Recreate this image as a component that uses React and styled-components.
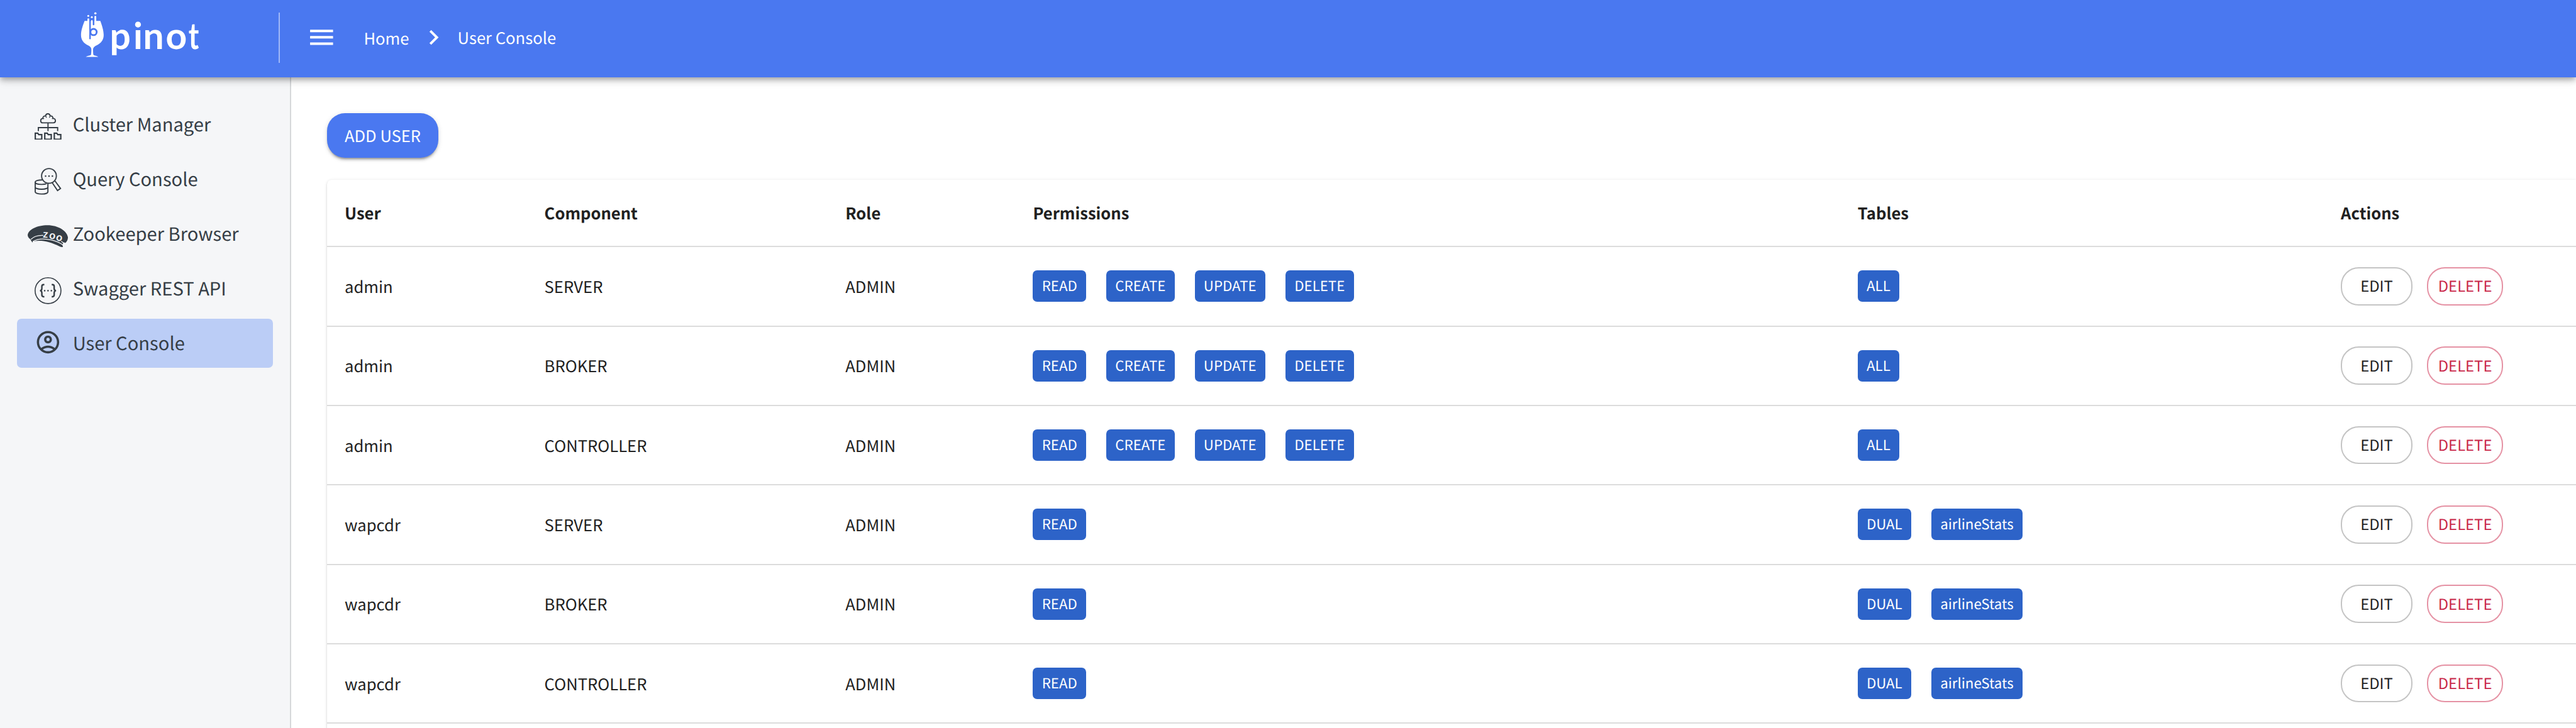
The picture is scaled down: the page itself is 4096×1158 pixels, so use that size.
import React from "react";
import styled, { createGlobalStyle } from "styled-components";

/* All lengths are design units, scaled once here. */
const SCALE = 4096 / 4604;
const s = (n) => `${+(n * SCALE).toFixed(3)}px`;

const FONT = `"Noto Sans CJK SC", "Noto Sans", sans-serif`;
const BLUE = "#4a78f0";
const INK = "#363e46";

const GlobalStyle = createGlobalStyle`
  *, *::before, *::after { box-sizing: border-box; }
  html, body { margin: 0; padding: 0; overflow: hidden; }
  body {
    background: #fff;
    color: #212121;
    font-family: ${FONT};
    text-rendering: geometricPrecision;
    -webkit-font-smoothing: antialiased;
  }
`;

const Page = styled.div`
  display: flex;
  flex-direction: column;
  height: 100vh;
  overflow: hidden;
`;

const Header = styled.header`
  position: relative;
  z-index: 2;
  flex: none;
  display: flex;
  align-items: center;
  height: ${s(138)};
  padding: 0 0 ${s(4)} ${s(140)};
  background: ${BLUE};
  color: #fff;
  box-shadow: 0 ${s(4)} ${s(8)} ${s(-2)} rgba(0, 0, 0, 0.2),
    0 ${s(8)} ${s(10)} 0 rgba(0, 0, 0, 0.14),
    0 ${s(2)} ${s(20)} 0 rgba(0, 0, 0, 0.12);
`;

const LogoArt = styled.svg`
  flex: none;
  width: ${s(220)};
  height: ${s(88)};
  margin-top: ${s(-10)};
`;

const HeaderDivider = styled.span`
  flex: none;
  width: 2px;
  height: ${s(90)};
  margin-left: ${s(138)};
  background: rgba(255, 255, 255, 0.48);
`;

const MenuIcon = styled.svg`
  flex: none;
  width: ${s(54.7)};
  height: ${s(54.7)};
  margin-left: ${s(47.6)};
  fill: currentColor;
`;

const Crumbs = styled.nav`
  display: flex;
  align-items: center;
  margin-left: ${s(47.6)};
  font-size: ${s(28.8)};
  line-height: ${s(44)};
  white-space: nowrap;
`;

const Crumb = styled.span`
  padding-top: ${(p) => s(p.$drop || 0)};
`;

const ChevronIcon = styled.svg`
  width: ${s(53)};
  height: ${s(53)};
  margin: 0 ${s(15.7)} 0 ${s(18)};
  fill: currentColor;
`;

const Body = styled.div`
  flex: 1;
  display: flex;
  min-height: 0;
`;

const Sidebar = styled.aside`
  flex: none;
  display: flex;
  flex-direction: column;
  gap: ${s(10)};
  width: ${s(520)};
  padding: ${s(40)} ${s(30)} 0 ${s(30)};
  background: #f5f6f8;
  border-right: 2px solid #d6d8da;
`;

const NavItem = styled.a`
  display: flex;
  align-items: center;
  height: ${s(88)};
  padding-left: ${s(20)};
  border-radius: ${s(8)};
  background: ${(p) => (p.$active ? "#bbcdf6" : "transparent")};
  color: ${INK};
`;

const NavIcon = styled.span`
  flex: none;
  display: flex;
  justify-content: center;
  width: ${s(72)};
  padding: ${(p) => s(p.$drop)} 0 ${(p) => s(p.$lift)};

  svg {
    display: block;
    width: ${(p) => s(p.$w)};
    height: ${(p) => s(p.$h)};
  }
`;

const NavLabel = styled.span`
  padding: 0 0 ${s(1.4)} ${s(8)};
  font-size: ${s(32.75)};
  line-height: ${s(48)};
  white-space: nowrap;
`;

const Main = styled.main`
  flex: 1;
  display: flex;
  flex-direction: column;
  min-width: 0;
  padding: ${s(64)} 0 0 ${s(64)};
  overflow: hidden;
`;

const AddButton = styled.button`
  flex: none;
  align-self: flex-start;
  width: ${s(200)};
  height: ${s(80)};
  padding: 0;
  border: 0;
  border-radius: ${s(32)};
  background: ${BLUE};
  color: #fff;
  font: 400 ${s(28.7)} / ${s(44)} ${FONT};
  text-rendering: inherit;
  box-shadow: 0 ${s(6)} ${s(2)} ${s(-4)} rgba(0, 0, 0, 0.2),
    0 ${s(4)} ${s(4)} 0 rgba(0, 0, 0, 0.14),
    0 ${s(2)} ${s(10)} 0 rgba(0, 0, 0, 0.12);
`;

const Card = styled.section`
  flex: 1;
  margin-top: ${s(40)};
  border-radius: ${s(8)} 0 0 0;
  background: #fff;
  box-shadow: 0 ${s(4)} ${s(2)} ${s(-2)} rgba(0, 0, 0, 0.2),
    0 ${s(2)} ${s(2)} 0 rgba(0, 0, 0, 0.14),
    0 ${s(2)} ${s(6)} 0 rgba(0, 0, 0, 0.12);
`;

const Row = styled.div`
  display: grid;
  grid-template-columns: ${[357, 538, 335.2, 1474, 863.6].map(s).join(" ")} 1fr;
  align-items: center;
  height: ${(p) => s(p.$head ? 120 : 142)};
  padding-left: ${s(32)};
  border-bottom: 2px solid #dcdcdc;
`;

const HeadCell = styled.div`
  padding-bottom: ${s(0.8)};
  font-size: ${s(28.75)};
  font-weight: 700;
  line-height: ${s(44)};
`;

const Cell = styled.div`
  padding-top: ${s(0.8)};
  font-size: ${s(28.8)};
  line-height: ${s(44)};
`;

const Group = styled.div`
  display: flex;
  align-items: center;
  gap: ${(p) => s(p.$gap)};
`;

const Chip = styled.span`
  height: ${s(56)};
  padding: 0 ${s(16)};
  border-radius: ${s(8)};
  background: #2d63c8;
  color: #fff;
  font-size: ${s(25.05)};
  line-height: ${s(56)};
  white-space: nowrap;
`;

const PillButton = styled.button`
  width: ${(p) => s(p.$danger ? 136 : 128)};
  height: ${s(68)};
  padding: 0 0 ${s(3)};
  border: 2px solid ${(p) => (p.$danger ? "#e592a4" : "#c4c4c4")};
  border-radius: ${s(32)};
  background: transparent;
  color: ${(p) => (p.$danger ? "#c92849" : "#212121")};
  font: 400 ${s(26.8)} / ${s(40)} ${FONT};
  text-rendering: inherit;
`;

const Wordmark = styled.g`
  fill: #fff;
  font: 700 66px Lato, sans-serif;
`;

const Logo = () => (
  <LogoArt viewBox="140 18 220 88">
    <path
      fill="#fff"
      d="M150.7 37.3H155.7V34.6a1.65 1.65 0 0 1 3.3 0V37.3H162.3a1.4 1.4 0 0 1 2.8 0V37.3H168.3V30a1.6 1.6 0 0 1 3.2 0V37.3H178.8C181.5 45 184.8 54 184.8 62.7C184.8 72 179.5 77.5 172.5 81C167.5 83.5 165.7 85.5 165.8 89.5C165.9 93.5 166 97 166.6 98.4C168.5 99.6 173 100 175.2 101.8H152.8C155 100 159.7 99.6 161.9 98.4C162.6 97 162.7 93.5 162.8 89.5C162.9 85.5 161.5 83.5 156.5 81C149.5 77.5 144.3 72 144.3 62.7C144.3 54 147.8 45 150.7 37.3Z"
    />
    <circle cx="157.3" cy="28.4" r="1.7" fill="#fff" />
    <circle cx="163.6" cy="30.7" r="1.7" fill="#fff" />
    <circle cx="170" cy="24" r="2" fill="#fff" />
    <path d="M160.4 36V68.9" stroke={BLUE} strokeWidth="2.7" strokeLinecap="round" />
    <path d="M166.7 36V43.8" stroke={BLUE} strokeWidth="2.8" strokeLinecap="round" />
    <circle cx="166.7" cy="57.3" r="5.6" fill="none" stroke={BLUE} strokeWidth="3.2" />
    <Wordmark>
      <text x="195.5 237.8 255.2 295.6" y="88">
        pino
      </text>
      <text transform="translate(336.4 88) scale(.76 1)">t</text>
    </Wordmark>
  </LogoArt>
);

const ClusterIcon = () => (
  <svg viewBox="0 0 48 48" fill="none" stroke={INK} strokeWidth="2.1">
    <path d="M14.6 17.3C12 17.3 10.9 15.2 10.9 13.4C10.9 11.2 12.4 9.6 14.7 9.4C14.5 6.6 16.8 4.6 19.6 4.9C20 2.6 21.6 1.1 23.7 1.1S27.4 2.6 27.9 4.9C30.8 4.5 32.9 6.6 33 9.4C35.6 9.6 37.2 11.3 37.2 13.5C37.2 15.5 35.9 17.3 33.6 17.3Z" />
    <path d="M19.6 4.9L21.4 8.2M27.9 4.9L26.4 8.2M14.7 9.4L17 10M33 9.4L31 10" strokeWidth="1.4" />
    <path d="M24 17.3V32M6.7 32V25.9H41.2V32" />
    <path
      d="M1.2 46.7V35.9H5.6L7.4 38.3H12.8V46.7ZM18.2 46.7V35.9H22.6L24.4 38.3H29.8V46.7ZM35.2 46.7V35.9H39.6L41.4 38.3H46.8V46.7Z"
      strokeWidth="2.5"
    />
  </svg>
);

const QueryIcon = () => (
  <svg viewBox="0 0 48 48" fill="none" stroke={INK} strokeWidth="2.1">
    <circle cx="25.7" cy="14.4" r="13.2" />
    <path d="M18.4 14.8h2.5M24.5 14.8h2.5M30.6 14.8h2.5" strokeWidth="2.5" />
    <path d="M31.6 26.8L41 40.6L46.4 36.9L36.2 23" />
    <path d="M14 21.6C6.5 21.4 1.1 23 1.1 25.6C1.1 28 6 29.7 12.6 29.7C16 29.7 19.4 29.2 21.4 28.3" />
    <path d="M1.1 25.6V42.6C1.1 45 6 46.8 12.5 46.8S23.8 45 23.8 42.6V27.4M1.1 34.2C1.1 36.6 6 38.2 12.5 38.2S23.8 36.6 23.8 34.2" />
  </svg>
);

const ZookeeperIcon = () => (
  <svg viewBox="0 0 72 40">
    <path
      fill={INK}
      d="M4.5 25C1.5 23.5 0 20.5 0 17.8C1.5 7.5 17 .2 35.5 .2C54.5 .2 70.5 10.5 72 22C72 26.5 70 30 67.3 32L64.5 30.5L62 35.5C62.5 37 63.4 38.6 62.6 39.3C60.5 40.6 50.5 33.8 38 30.5C28 28 18 27.6 9.5 29.2L8.3 31.2Z"
    />
    <path d="M5.8 25.6C11 20 19 18 28 18.4M60 29L65.2 32.8" fill="none" stroke="#f5f6f8" strokeWidth="1.4" />
    <path d="M9 29.6C18 24 30 24 42 26.6C51 28.6 58 32 63.5 36" fill="none" stroke="#f5f6f8" strokeWidth="1.4" />
    <text
      x="27 37.6 49.4"
      y="22.2 23.8 26.4"
      rotate="4 10 18"
      fill="#f5f6f8"
      fontFamily="Lato, sans-serif"
      fontWeight="700"
      fontSize="19.5"
    >
      zoo
    </text>
  </svg>
);

const SwaggerIcon = () => (
  <svg viewBox="0 0 48 48" fill="none" stroke={INK}>
    <circle cx="24" cy="24" r="23.1" strokeWidth="1.8" />
    <path
      d="M17.4 13.2H16C13.8 13.2 13 14.3 13 16.4V20C13 22.6 12 24 9.6 24C12 24 13 25.4 13 28V31.6C13 33.7 13.8 34.8 16 34.8H17.4M30.6 13.2H32C34.2 13.2 35 14.3 35 16.4V20C35 22.6 36 24 38.4 24C36 24 35 25.4 35 28V31.6C35 33.7 34.2 34.8 32 34.8H30.6"
      strokeWidth="2.7"
    />
    <path d="M16.7 24h2.6M22.7 24h2.6M28.7 24h2.6" strokeWidth="2.6" />
  </svg>
);

const AccountIcon = () => (
  <svg viewBox="0 0 24 24" fill={INK}>
    <path d="M12 2C6.48 2 2 6.48 2 12s4.48 10 10 10 10-4.48 10-10S17.52 2 12 2zM7.35 18.5C8.66 17.56 10.26 17 12 17s3.34.56 4.65 1.5C15.34 19.44 13.74 20 12 20s-3.34-.56-4.65-1.5zm10.79-1.38C16.45 15.8 14.32 15 12 15s-4.45.8-6.14 2.12C4.7 15.73 4 13.95 4 12c0-4.42 3.58-8 8-8s8 3.58 8 8c0 1.95-.7 3.73-1.86 5.12z" />
    <path d="M12 6c-1.93 0-3.5 1.57-3.5 3.5S10.07 13 12 13s3.5-1.57 3.5-3.5S13.93 6 12 6zm0 5c-.83 0-1.5-.67-1.5-1.5S11.17 8 12 8s1.5.67 1.5 1.5S12.83 11 12 11z" />
  </svg>
);

const NAV = [
  { label: "Cluster Manager", Icon: ClusterIcon, drop: 8 },
  { label: "Query Console", Icon: QueryIcon, drop: 8 },
  { label: "Zookeeper Browser", Icon: ZookeeperIcon, drop: 8, w: 72, h: 40 },
  { label: "Swagger REST API", Icon: SwaggerIcon, drop: 8 },
  { label: "User Console", Icon: AccountIcon, lift: 4, active: true },
];

const ALL_PERMISSIONS = ["READ", "CREATE", "UPDATE", "DELETE"];
const COMPONENTS = ["SERVER", "BROKER", "CONTROLLER"];
const USERS = [
  { user: "admin", permissions: ALL_PERMISSIONS, tables: ["ALL"] },
  { user: "wapcdr", permissions: ["READ"], tables: ["DUAL", "airlineStats"] },
].flatMap((u) => COMPONENTS.map((component) => ({ ...u, component, role: "ADMIN" })));

const Chips = ({ items }) => (
  <Group $gap={36}>
    {items.map((item) => (
      <Chip key={item}>{item}</Chip>
    ))}
  </Group>
);

export default function App() {
  return (
    <Page>
      <GlobalStyle />
      <Header>
        <Logo />
        <HeaderDivider />
        <MenuIcon viewBox="0 0 24 24">
          <path d="M3 18h18v-2H3v2zm0-5h18v-2H3v2zm0-7v2h18V6H3z" />
        </MenuIcon>
        <Crumbs>
          <Crumb $drop={2.4}>Home</Crumb>
          <ChevronIcon viewBox="0 0 24 24">
            <path d="M10 6L8.59 7.41 13.17 12l-4.58 4.59L10 18l6-6z" />
          </ChevronIcon>
          <Crumb>User Console</Crumb>
        </Crumbs>
      </Header>
      <Body>
        <Sidebar>
          {NAV.map(({ label, Icon, drop = 0, lift = 0, w = 48, h = 48, active }) => (
            <NavItem key={label} $active={active}>
              <NavIcon $drop={drop} $lift={lift} $w={w} $h={h}>
                <Icon />
              </NavIcon>
              <NavLabel>{label}</NavLabel>
            </NavItem>
          ))}
        </Sidebar>
        <Main>
          <AddButton>ADD USER</AddButton>
          <Card>
            <Row $head>
              {["User", "Component", "Role", "Permissions", "Tables", "Actions"].map((title) => (
                <HeadCell key={title}>{title}</HeadCell>
              ))}
            </Row>
            {USERS.map((u) => (
              <Row key={u.user + u.component}>
                <Cell>{u.user}</Cell>
                <Cell>{u.component}</Cell>
                <Cell>{u.role}</Cell>
                <Chips items={u.permissions} />
                <Chips items={u.tables} />
                <Group $gap={26}>
                  <PillButton>EDIT</PillButton>
                  <PillButton $danger>DELETE</PillButton>
                </Group>
              </Row>
            ))}
          </Card>
        </Main>
      </Body>
    </Page>
  );
}
